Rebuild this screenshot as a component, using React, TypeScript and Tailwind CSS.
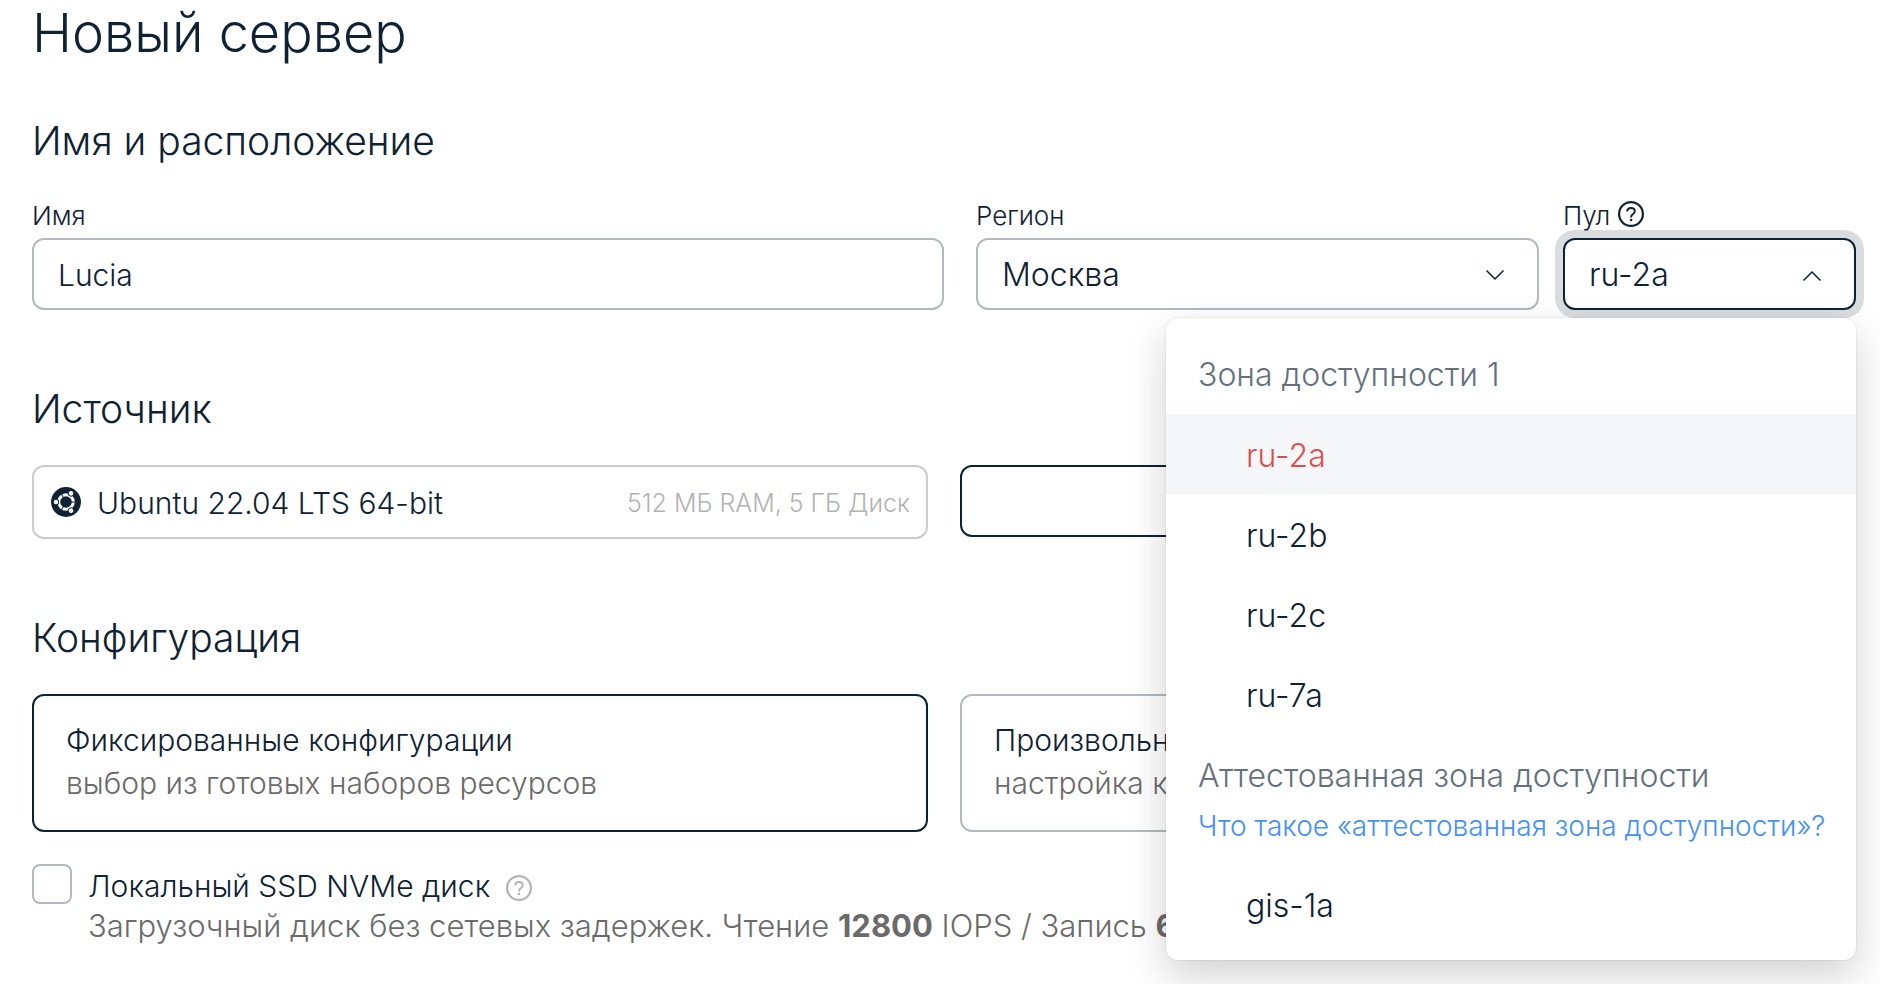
import React, { useState } from "react";

function HelpIcon({ className }: { className: string }) {
  return (
    <svg viewBox="0 0 26 26" className={className} fill="none" stroke="currentColor" aria-hidden="true">
      <circle cx="13" cy="13" r="11.9" strokeWidth="2.2" />
      <path d="M9.2 10.6c0-2.2 1.6-3.6 3.8-3.6s3.8 1.4 3.8 3.3c0 1.7-1 2.4-2.1 3.1-1 .7-1.6 1.2-1.6 2.5v.5" strokeWidth="1.9" />
      <circle cx="13.1" cy="19" r="1.3" fill="currentColor" stroke="none" />
    </svg>
  );
}

function Chevron({ up = false }: { up?: boolean }) {
  return (
    <svg viewBox="0 0 20 12" className="mt-0.5 h-3 w-5 shrink-0" fill="none" stroke="currentColor" strokeWidth="1.5" aria-hidden="true">
      <path d={up ? "M1.5 10.5 10 2l8.5 8.5" : "M1.5 1.5 10 10l8.5-8.5"} />
    </svg>
  );
}

function UbuntuIcon() {
  const angles = [60, 180, 300];
  return (
    <svg viewBox="-15 -15 30 30" className="size-[30px] shrink-0" aria-hidden="true">
      <circle r="15" fill="#0f2233" />
      <circle r="7.3" fill="none" stroke="#fff" strokeWidth="3" />
      {angles.map((a) => (
        <g key={a} transform={`rotate(${a})`}>
          <circle cx="10" r="3.2" fill="#0f2233" />
          <circle cx="10" r="2.3" fill="#fff" />
          <path d="M-5 0H-10" stroke="#0f2233" strokeWidth="1" />
        </g>
      ))}
    </svg>
  );
}

function PoolOption({ name, selected, onPick }: { name: string; selected: boolean; onPick: (n: string) => void }) {
  return (
    <button
      type="button"
      role="option"
      aria-selected={selected}
      onClick={() => onPick(name)}
      className={
        selected
          ? "flex h-20 w-full items-center bg-[#f5f6f8] px-20 pt-1 text-left text-[#db504e]"
          : "flex h-20 w-full items-center px-20 pt-1 text-left text-[#0f2233] hover:bg-[#f5f6f8]"
      }
    >
      {name}
    </button>
  );
}

export default function App() {
  const [pool, setPool] = useState("ru-2a");
  const [open, setOpen] = useState(true);
  const pick = (n: string) => {
    setPool(n);
    setOpen(false);
  };

  return (
    <main className="min-h-screen overflow-hidden bg-white pb-11 pl-8 pr-6 font-['Inter','Noto_Sans',sans-serif] font-light text-[#0f2233]">
      <h1 className="text-[54px] leading-[66px]">Новый сервер</h1>

      <section className="mt-[50px]">
        <h2 className="text-[39px] leading-[50px]">Имя и расположение</h2>
        <div className="mt-8 flex">
          <div className="mr-8 min-w-0 flex-[912]">
            <label htmlFor="name" className="flex h-10 items-center pb-1 text-[26px] leading-8">Имя</label>
            <input
              id="name"
              defaultValue="Lucia"
              className="h-[72px] w-full rounded-xl border-2 border-[#b3babf] px-6 pt-0.5 text-[30px] outline-none"
            />
          </div>
          <div className="mr-6 min-w-0 flex-[563]">
            <label htmlFor="region" className="flex h-10 items-center pb-1 text-[26px] leading-8">Регион</label>
            <div className="grid items-center">
              <select
                id="region"
                className="col-start-1 row-start-1 h-[72px] w-full appearance-none rounded-xl border-2 border-[#b3babf] bg-white px-6 pt-0.5 text-[32px] outline-none"
              >
                <option>Москва</option>
              </select>
              <span className="pointer-events-none col-start-1 row-start-1 mr-[34px] justify-self-end">
                <Chevron />
              </span>
            </div>
          </div>
          <div className="relative min-w-0 flex-[293]">
            <div className="flex h-10 items-center gap-2 pb-1">
              <label htmlFor="pool" className="text-[26px] leading-8">Пул</label>
              <HelpIcon className="mb-1 size-[26px]" />
            </div>
            <button
              id="pool"
              type="button"
              aria-haspopup="listbox"
              aria-expanded={open}
              onClick={() => setOpen(!open)}
              className="flex h-[72px] w-full items-center justify-between rounded-xl border-2 border-[#0f2233] bg-white pl-6 pr-8 pt-0.5 text-[32px] ring-8 ring-[#d9dde0]"
            >
              {pool}
              <Chevron up={open} />
            </button>
            {open && (
              <div
                role="listbox"
                aria-label="Пул"
                className="absolute right-0 top-full z-10 mt-2 w-[690px] rounded-xl bg-white py-4 text-[32px] leading-10 shadow-[0_16px_40px_rgba(0,0,0,0.18),0_0_2px_rgba(0,0,0,0.15)]"
              >
                <div role="group" aria-label="Зона доступности 1">
                  <div className="flex h-20 items-center px-8 pt-0.5 text-[#64717c]">Зона доступности 1</div>
                  {["ru-2a", "ru-2b", "ru-2c", "ru-7a"].map((n) => (
                    <PoolOption key={n} name={n} selected={n === pool} onPick={pick} />
                  ))}
                </div>
                <div role="group" aria-label="Аттестованная зона доступности">
                  <div className="px-8 pb-[18px] pt-[22px] text-[#64717c]">
                    <div>Аттестованная зона доступности</div>
                    <a href="#attested" className="mt-2.5 block whitespace-nowrap text-[28px] leading-10 text-[#4591f7]">
                      Что такое «аттестованная зона доступности»?
                    </a>
                  </div>
                  <PoolOption name="gis-1a" selected={pool === "gis-1a"} onPick={pick} />
                </div>
              </div>
            )}
          </div>
        </div>
      </section>

      <section className="mt-[74px]">
        <h2 className="text-[39px] leading-[50px]">Источник</h2>
        <div className="mt-[31px] grid grid-cols-2 items-start gap-8">
          <div className="flex h-[74px] items-center justify-between rounded-xl border-2 border-[#cccccc] pl-[17px] pr-4">
            <div className="flex items-center gap-4">
              <UbuntuIcon />
              <span className="pt-0.5 text-[30px]">Ubuntu 22.04 LTS 64-bit</span>
            </div>
            <span className="pt-1 text-[25px] text-[#b3b3b3]">512 МБ RAM, 5 ГБ Диск</span>
          </div>
          <button type="button" aria-label="Выбрать источник" className="h-[72px] rounded-xl border-2 border-[#0f2233]" />
        </div>
      </section>

      <section className="mt-[74px]">
        <h2 className="text-[39px] leading-[50px]">Конфигурация</h2>
        <div className="mt-[31px] grid grid-cols-2 gap-8">
          <button type="button" aria-pressed="true" className="h-[138px] rounded-xl border-2 border-[#0f2233] px-8 pb-0.5 text-left">
            <span className="block text-[30px] leading-[43px]">Фиксированные конфигурации</span>
            <span className="block text-[30px] leading-[43px] text-[#6b6b6b]">выбор из готовых наборов ресурсов</span>
          </button>
          <button type="button" aria-pressed="false" className="h-[138px] rounded-xl border-2 border-[#b3babf] px-8 pb-0.5 text-left">
            <span className="block text-[30px] leading-[43px]">Произвольная</span>
            <span className="block text-[30px] leading-[43px] text-[#6b6b6b]">настройка количества ресурсов</span>
          </button>
        </div>
        <div className="mt-8 flex items-start gap-4">
          <input id="local-disk" type="checkbox" className="size-10 shrink-0 appearance-none rounded-lg border-2 border-[#b3babf] checked:bg-[#0f2233]" />
          <div className="min-w-0 pt-0.5 leading-10">
            <div className="flex items-center gap-4">
              <label htmlFor="local-disk" className="text-[30px]">Локальный SSD NVMe диск</label>
              <HelpIcon className="mt-1 size-[26px] text-[#b3b3b3]" />
            </div>
            <p className="whitespace-nowrap text-[31px] leading-10 text-[#6b6b6b]">
              Загрузочный диск без сетевых задержек. Чтение <b className="font-bold">12800</b> IOPS / Запись <b className="font-bold">6400</b> IOPS
            </p>
          </div>
        </div>
      </section>
    </main>
  );
}
